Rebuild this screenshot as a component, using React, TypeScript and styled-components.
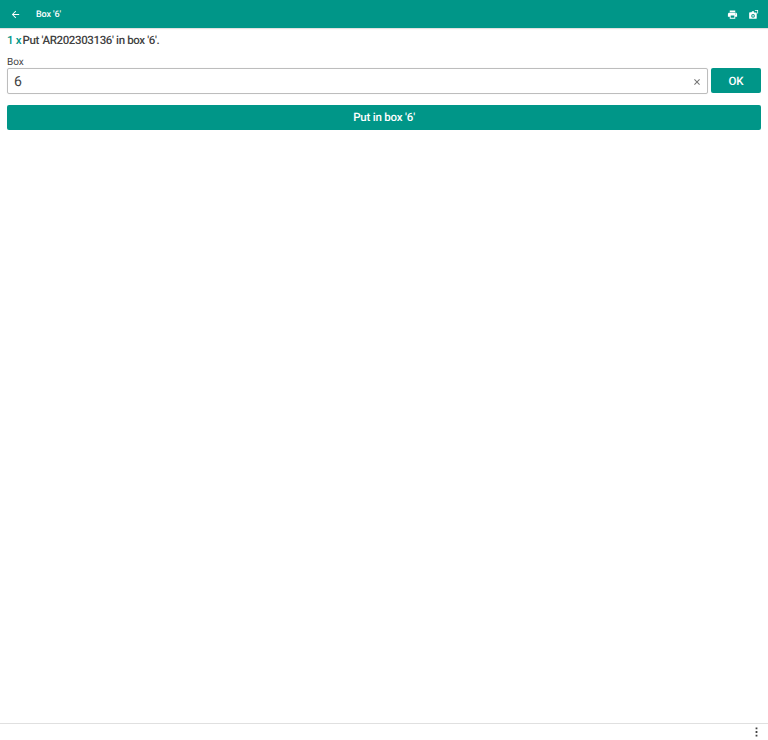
import React from "react";
import styled, { createGlobalStyle } from "styled-components";

const Global = createGlobalStyle`
  html, body { margin: 0; padding: 0; background: #fff; }
  body {
    font-family: Roboto, "Liberation Sans", sans-serif;
    color: #424242;
    text-rendering: geometricPrecision;
  }
`;

const Page = styled.div`
  width: 768px;
  height: 740px;
  display: flex;
  flex-direction: column;
  overflow: hidden;
  background: #fff;
`;

const TopBar = styled.header`
  height: 28px;
  flex: none;
  background: #009688;
  color: #fff;
  display: flex;
  align-items: center;
  padding: 0 9px 0 10px;
  box-shadow: 0 1px 1px rgba(0, 0, 0, 0.12);
`;

const BarTitle = styled.div`
  margin: 1px 0 0 15px;
  font-size: 9px;
  font-weight: 500;
  letter-spacing: -0.1px;
  flex: 1;
`;

const BarIcons = styled.div`
  display: flex;
  align-items: center;
  gap: 10px;
`;

const Glyph = styled.svg`
  display: block;
  fill: currentColor;
`;

const Content = styled.main`
  flex: 1;
  padding: 5px 7px 0;
  display: flex;
  flex-direction: column;
`;

const Headline = styled.div`
  font-size: 11.5px;
  font-weight: 500;
  line-height: 14px;
  letter-spacing: -0.37px;
  display: flex;
  gap: 1.5px;
`;

const Count = styled.span`
  color: #009688;
`;

const FieldLabel = styled.label`
  margin-top: 10px;
  font-size: 10px;
  letter-spacing: -0.1px;
  line-height: 11px;
  display: block;
`;

const FieldRow = styled.div`
  display: flex;
  gap: 3px;
  align-items: flex-start;
`;

const InputBox = styled.div`
  flex: 1;
  height: 26px;
  box-sizing: border-box;
  border: 1px solid #bdbdbd;
  border-radius: 2px;
  display: flex;
  align-items: center;
  padding: 1px 7px 0 6px;
  font-size: 14px;
  box-shadow: 0 0 1px rgba(0, 0, 0, 0.15);
`;

const InputValue = styled.span`
  flex: 1;
`;

const ClearIcon = styled.svg`
  display: block;
  stroke: #757575;
  stroke-width: 1.2;
`;

const PrimaryButton = styled.button<{ $wide?: boolean }>`
  border: 0;
  margin: 0;
  padding: 0 0 ${(p) => (p.$wide ? "1px" : "0")};
  background: #009688;
  color: #fff;
  border-radius: 2px;
  font-family: inherit;
  font-weight: 500;
  font-size: 11.5px;
  letter-spacing: -0.2px;
  text-rendering: geometricPrecision;
  height: 25px;
  width: ${(p) => (p.$wide ? "100%" : "50px")};
  flex: none;
`;

const ActionRow = styled.div`
  margin-top: 11px;
`;

const BottomBar = styled.footer`
  height: 16px;
  flex: none;
  border-top: 1px solid #e0e0e0;
  display: flex;
  align-items: center;
  justify-content: flex-end;
  padding: 0 8.5px 0 0;
  color: #424242;
`;

export default function App() {
  return (
    <Page>
      <Global />
      <TopBar>
        <Glyph width="11" height="11" viewBox="0 0 24 24">
          <path d="M20 11H7.83l5.59-5.59L12 4l-8 8 8 8 1.41-1.41L7.83 13H20v-2z" />
        </Glyph>
        <BarTitle>Box '6'</BarTitle>
        <BarIcons>
          <Glyph width="11" height="11" viewBox="0 0 24 24">
            <path d="M19 8H5c-1.66 0-3 1.34-3 3v6h4v4h12v-4h4v-6c0-1.66-1.34-3-3-3zm-3 11H8v-5h8v5zm3-7c-.55 0-1-.45-1-1s.45-1 1-1 1 .45 1 1-.45 1-1 1zm-1-9H6v4h12V3z" />
          </Glyph>
          <Glyph width="11" height="11" viewBox="0 0 24 24">
            <path
              fillRule="evenodd"
              d="M4 7h3.5L9 5h4v2.5h4.5c.8 0 1.5.7 1.5 1.5v11c0 .8-.7 1.5-1.5 1.5H4c-.8 0-1.5-.7-1.5-1.5V8.5C2.5 7.7 3.2 7 4 7zm7 4a4 4 0 1 0 0 8 4 4 0 0 0 0-8zm0 2.2a1.8 1.8 0 1 1 0 3.6 1.8 1.8 0 0 1 0-3.6zM15 2h7v8h-1.8V3.8H15V2z"
            />
          </Glyph>
        </BarIcons>
      </TopBar>
      <Content>
        <Headline>
          <Count>1 x</Count>
          <span>Put 'AR202303136' in box '6'.</span>
        </Headline>
        <FieldLabel>Box</FieldLabel>
        <FieldRow>
          <InputBox>
            <InputValue>6</InputValue>
            <ClearIcon width="6" height="6" viewBox="0 0 7 7">
              <path d="M.5.5l6 6M6.5.5l-6 6" />
            </ClearIcon>
          </InputBox>
          <PrimaryButton>OK</PrimaryButton>
        </FieldRow>
        <ActionRow>
          <PrimaryButton $wide>Put in box '6'</PrimaryButton>
        </ActionRow>
      </Content>
      <BottomBar>
        <Glyph width="7" height="10" viewBox="0 0 7 10">
          <path d="M2.6 0.4h1.8v1.8H2.6zM2.6 4.1h1.8v1.8H2.6zM2.6 7.8h1.8v1.8H2.6z" />
        </Glyph>
      </BottomBar>
    </Page>
  );
}
